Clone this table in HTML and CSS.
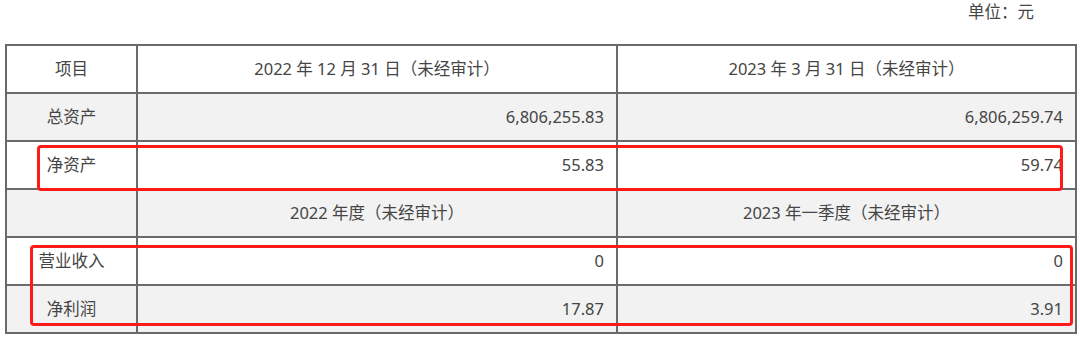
FILE: index.html
```html
<!DOCTYPE html>
<html lang="zh-CN">
<head>
<meta charset="utf-8">
<link rel="stylesheet" href="styles.css">
</head>
<body>
<div class="page">
  <div class="unit">单位：元</div>
  <div class="table-wrap">
    <table class="fin">
      <colgroup>
        <col class="c1"><col class="c2"><col class="c3">
      </colgroup>
      <tr class="white">
        <td class="label">项目</td>
        <td class="head">2022 年 12 月 31 日（未经审计）</td>
        <td class="head">2023 年 3 月 31 日（未经审计）</td>
      </tr>
      <tr class="grey">
        <td class="label">总资产</td>
        <td class="num">6,806,255.83</td>
        <td class="num">6,806,259.74</td>
      </tr>
      <tr class="white">
        <td class="label">净资产</td>
        <td class="num">55.83</td>
        <td class="num">59.74</td>
      </tr>
      <tr class="grey">
        <td class="label"></td>
        <td class="head">2022 年度（未经审计）</td>
        <td class="head">2023 年一季度（未经审计）</td>
      </tr>
      <tr class="white">
        <td class="label">营业收入</td>
        <td class="num">0</td>
        <td class="num">0</td>
      </tr>
      <tr class="grey">
        <td class="label">净利润</td>
        <td class="num">17.87</td>
        <td class="num">3.91</td>
      </tr>
    </table>
    <div class="mark mark-a"></div>
    <div class="mark mark-b"></div>
  </div>
</div>
</body>
</html>
```

FILE: styles.css
```css
html, body {
  margin: 0;
  padding: 0;
  background: #ffffff;
}

body {
  font-family: "Noto Sans", "Noto Sans CJK SC", sans-serif;
  font-size: 16.5px;
  color: #454545;
}

.page {
  width: 1080px;
  height: 337px;
  position: relative;
}

.unit {
  height: 44px;
  box-sizing: border-box;
  padding-top: 0;
  padding-right: 46px;
  text-align: right;
  line-height: 24px;
}

.table-wrap {
  position: relative;
  margin-left: 5px;
  width: 1070px;
}

.fin {
  border-collapse: collapse;
  width: 1070px;
  table-layout: fixed;
}

.c1 { width: 131px; }
.c2 { width: 480px; }
.c3 { width: 459px; }

.fin td {
  border: 2px solid #6a6a6a;
  height: 46px;
  padding: 0 12px;
  line-height: 20px;
  white-space: nowrap;
}

.fin tr.grey td { background: #f2f2f2; }
.fin tr.white td { background: #ffffff; }

.label { text-align: center; }
.head { text-align: center; }
.num { text-align: right; }

.mark {
  position: absolute;
  border: 3px solid #ff1a1a;
  border-radius: 4px;
  box-sizing: border-box;
}

.mark-a {
  left: 32px;
  top: 101px;
  width: 1026px;
  height: 46px;
}

.mark-b {
  left: 25px;
  top: 201px;
  width: 1043px;
  height: 81px;
}
```
